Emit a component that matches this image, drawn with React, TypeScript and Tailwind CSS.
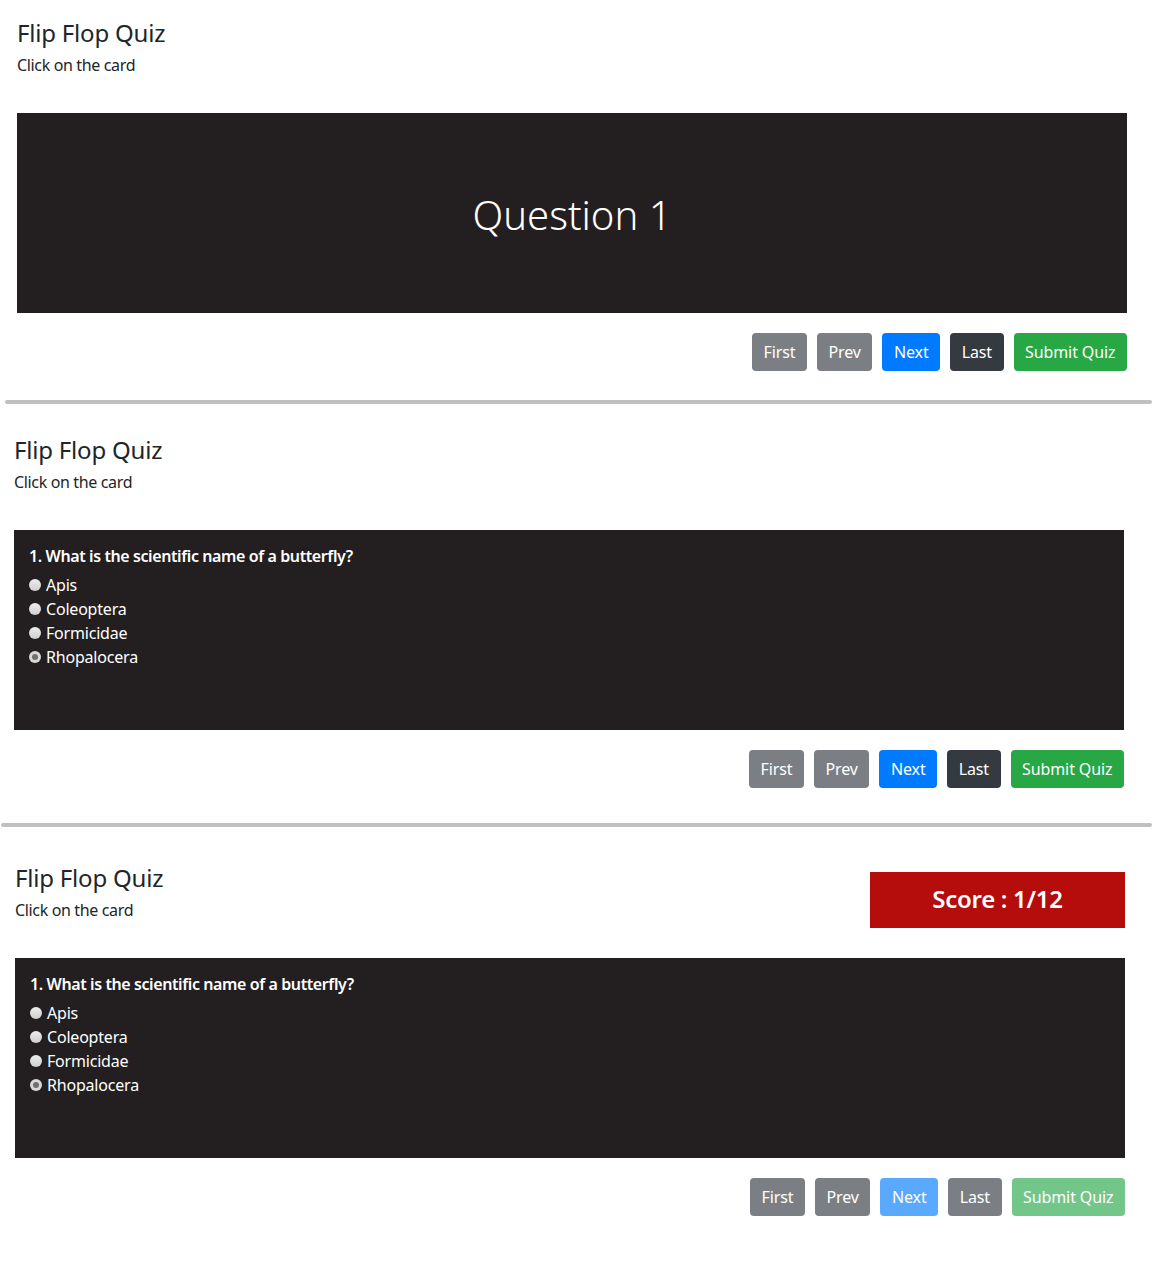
import React from 'react';

const options = ['Apis', 'Coleoptera', 'Formicidae', 'Rhopalocera'];

interface SectionProps {
	left: string;
	top: string;
	flipped: boolean;
	finished: boolean;
}

function Radio({ checked }: { checked: boolean }) {
	if (checked) {
		return (
			<span className="flex h-[12px] w-[12px] items-center justify-center rounded-full bg-[#d8d8d8]">
				<span className="h-[6px] w-[6px] rounded-full bg-[#6f6f6f]" />
			</span>
		);
	}
	return <span className="h-[12px] w-[12px] rounded-full bg-gradient-to-b from-[#eeeeee] to-[#cfcfcf]" />;
}

function QuizSection({ left, top, flipped, finished }: SectionProps) {
	const buttons = [
		{ label: 'First', cls: 'bg-[#7b7f83]' },
		{ label: 'Prev', cls: 'bg-[#7b7f83]' },
		{ label: 'Next', cls: finished ? 'bg-[#59a9ff]' : 'bg-[#007bff]' },
		{ label: 'Last', cls: finished ? 'bg-[#7b7f83]' : 'bg-[#343a40]' },
		{ label: 'Submit Quiz', cls: finished ? 'bg-[#73c68a]' : 'bg-[#28a745]' },
	];

	return (
		<div className={`${left} ${top} w-[1110px]`}>
			<div className="flex h-[98px] items-start justify-between">
				<div>
					<h4 className="mb-[6px] mt-[3px] text-[24px] leading-[29px] tracking-[-0.2px] text-[#212529]">
						Flip Flop Quiz
					</h4>
					<p className="text-[16px] leading-[24px] tracking-[-0.35px] text-[#212529]">Click on the card</p>
				</div>
				{finished && (
					<div className="mt-[12px] flex h-[56px] w-[255px] items-center justify-center bg-[#b50c0c] pb-[3px] text-[24px] font-semibold tracking-[-0.3px] text-white">
						Score : 1/12
					</div>
				)}
			</div>

			<div className="h-[200px] bg-[#231f20] text-white">
				{flipped ? (
					<div className="px-[15px] pt-[14px]">
						<p className="mb-[5px] text-[16px] font-semibold leading-[24px] tracking-[-0.4px]">
							1. What is the scientific name of a butterfly?
						</p>
						{options.map((opt, i) => (
							<label key={i} className="flex h-[24px] items-center gap-[5px] text-[16px] tracking-[-0.2px]">
								<Radio checked={i === 3} />
								<span>{opt}</span>
							</label>
						))}
					</div>
				) : (
					<div className="flex h-full items-center justify-center pt-[4px]">
						<span className="text-[40px] font-light">Question 1</span>
					</div>
				)}
			</div>

			<div className="mt-[20px] flex justify-end gap-[10px]">
				{buttons.map((b, i) => (
					<button
						key={i}
						className={`h-[38px] rounded-[4px] px-[11.5px] text-[16px] tracking-[-0.1px] text-white ${b.cls}`}
					>
						{b.label}
					</button>
				))}
			</div>
		</div>
	);
}

function App() {
	return (
		<div className="min-h-[1262px] bg-white font-['Noto_Sans',sans-serif]">
			<QuizSection left="ml-[17px]" top="pt-[15px]" flipped={false} finished={false} />
			<div className="ml-[5px] mt-[29px] h-[4px] rounded-full bg-[#c0c0c0]" />
			<QuizSection left="ml-[14px]" top="pt-[28px]" flipped={true} finished={false} />
			<div className="ml-[1px] mt-[35px] h-[4px] rounded-full bg-[#c0c0c0]" />
			<QuizSection left="ml-[15px]" top="pt-[33px]" flipped={true} finished={true} />
		</div>
	);
}

export default App;
